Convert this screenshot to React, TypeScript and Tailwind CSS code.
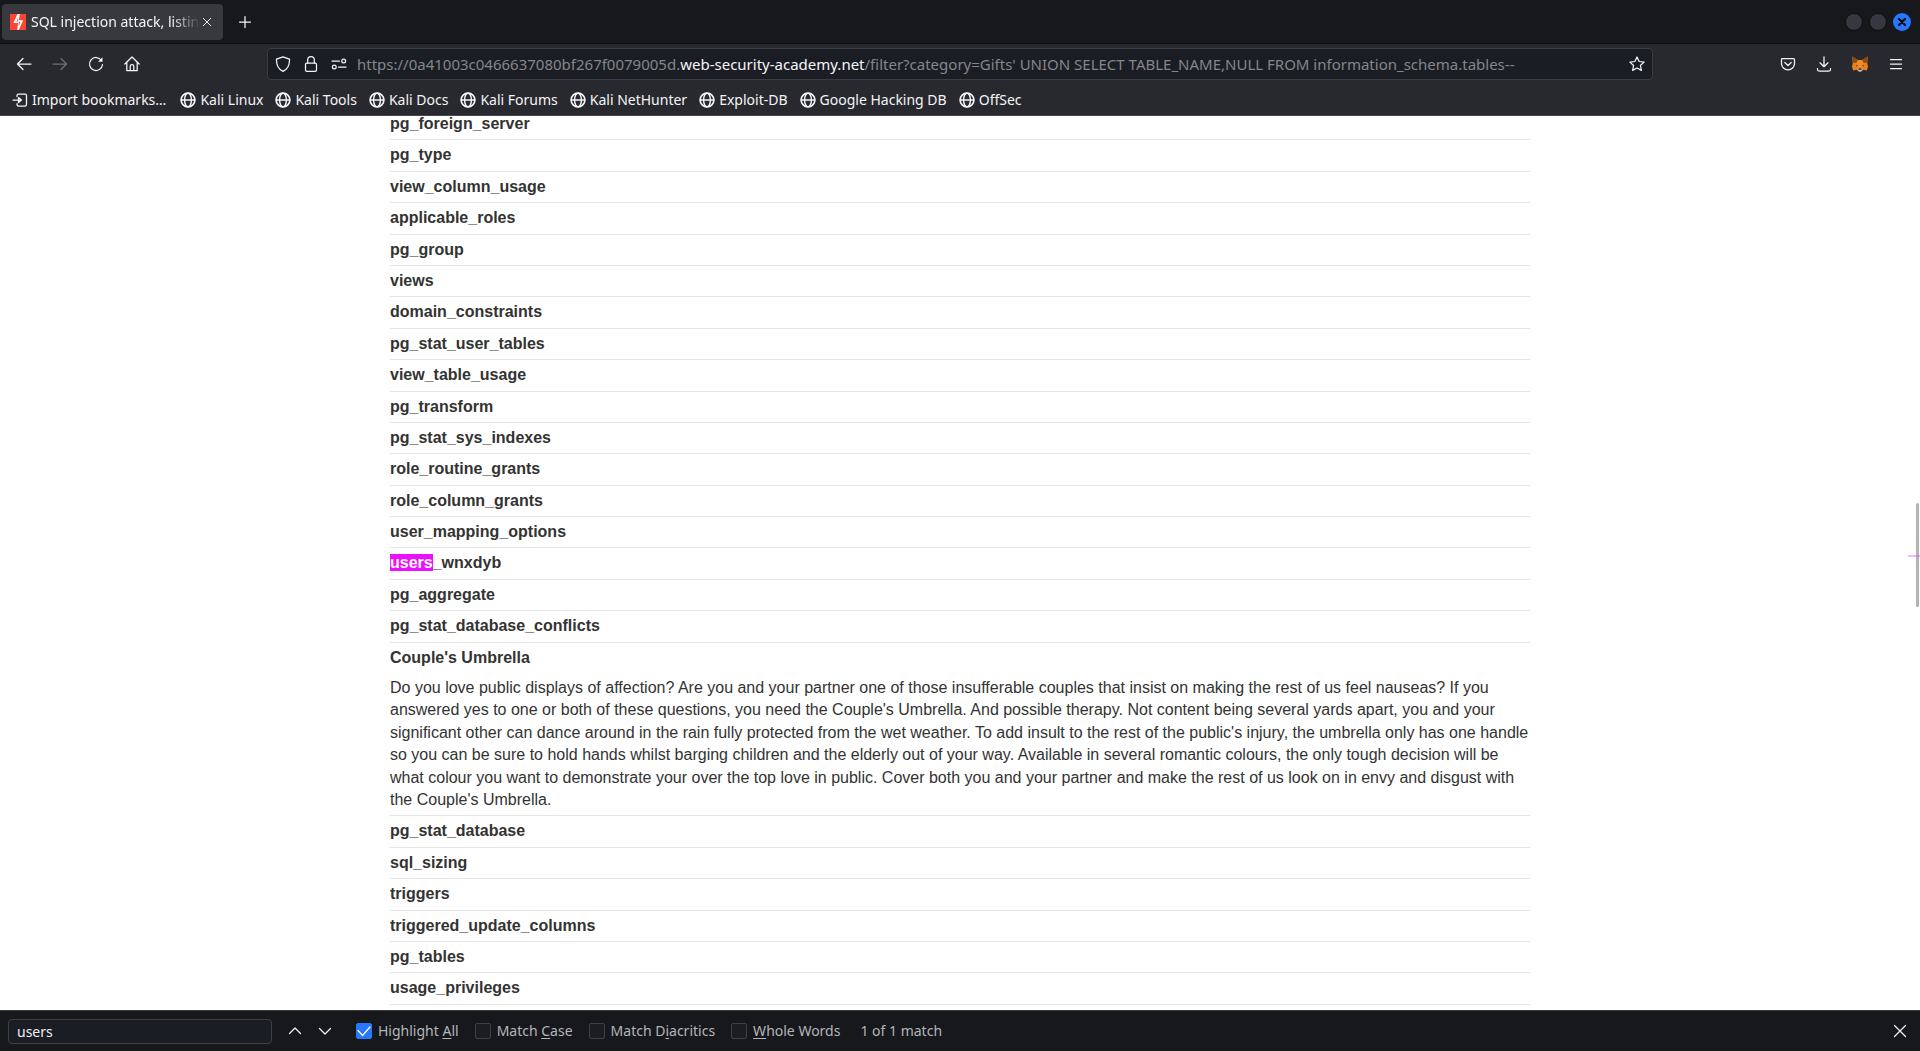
import React from "react";

const rowsBefore = [
  "pg_foreign_server",
  "pg_type",
  "view_column_usage",
  "applicable_roles",
  "pg_group",
  "views",
  "domain_constraints",
  "pg_stat_user_tables",
  "view_table_usage",
  "pg_transform",
  "pg_stat_sys_indexes",
  "role_routine_grants",
  "role_column_grants",
  "user_mapping_options",
  "users_wnxdyb",
  "pg_aggregate",
  "pg_stat_database_conflicts",
];

const rowsAfter = [
  "pg_stat_database",
  "sql_sizing",
  "triggers",
  "triggered_update_columns",
  "pg_tables",
  "usage_privileges",
];

const bookmarks = [
  "Kali Linux",
  "Kali Tools",
  "Kali Docs",
  "Kali Forums",
  "Kali NetHunter",
  "Exploit-DB",
  "Google Hacking DB",
  "OffSec",
];

type IconProps = { children: React.ReactNode; className?: string };

function Icon({ children, className = "size-4" }: IconProps) {
  return (
    <svg
      viewBox="0 0 16 16"
      className={`shrink-0 ${className}`}
      fill="none"
      stroke="currentColor"
      strokeWidth="1.25"
      strokeLinecap="round"
      strokeLinejoin="round"
      aria-hidden="true"
    >
      {children}
    </svg>
  );
}

function ToolButton({ label, children, dim }: { label: string; children: React.ReactNode; dim?: boolean }) {
  return (
    <button
      type="button"
      aria-label={label}
      disabled={dim}
      className={`flex size-9 items-center justify-center ${dim ? "text-[#6f7074]" : "text-[#f5f5f7]"}`}
    >
      {children}
    </button>
  );
}

function TabStrip() {
  return (
    <div className="flex h-11 items-center justify-between border-b border-[#0b0c0f] bg-[#17181c] pr-[9px]">
      <div className="flex items-center">
        <div className="ml-0.5 flex h-9 w-[221px] items-center rounded-sm bg-[#38393e] px-2">
          <svg viewBox="0 0 16 16" className="size-4 shrink-0" aria-hidden="true">
            <rect width="16" height="16" fill="#ff4433" />
            <path d="M7.500 0H9.800L8.400 9H3.400z" fill="#fff" />
            <path d="M8.400 6.200h4.800L8.800 16H7.200z" fill="#fff" />
            <path d="M8 3.500L6.600 7.400h1.200zM8.600 12.200l1.800-4.400H8.900z" fill="#ff4433" />
          </svg>
          <span className="ml-[5px] w-[170px] overflow-hidden whitespace-nowrap [mask-image:linear-gradient(to_right,#000_82%,transparent)]">
            SQL injection attack, listing the database contents
          </span>
          <button type="button" aria-label="Close tab">
            <Icon className="size-3">
              <path d="M3 3l10 10M13 3L3 13" />
            </Icon>
          </button>
        </div>
        <button type="button" aria-label="New tab" className="ml-2.5 p-1">
          <Icon>
            <path d="M8 2.500v11M2.500 8h11" />
          </Icon>
        </button>
      </div>
      <div className="flex items-center gap-1.5">
        <button type="button" aria-label="Minimize" className="size-[18px] rounded-full border border-[#0c0d10] bg-[#363741]" />
        <button type="button" aria-label="Maximize" className="size-[18px] rounded-full border border-[#0c0d10] bg-[#363741]" />
        <button type="button" aria-label="Close window" className="flex size-[18px] items-center justify-center rounded-full bg-[#2777ff] text-[#0c0d10]">
          <Icon className="size-3">
            <path d="M4 4l8 8M12 4l-8 8" strokeWidth="3" />
          </Icon>
        </button>
      </div>
    </div>
  );
}

function MetaMaskFox() {
  return (
    <svg viewBox="0 0 16 16" className="size-4" aria-hidden="true">
      <path d="M0 .5l6 3.600h4l6-3.600-.8 6 .8 4.200-1.200 3.800-3.400-.8L9.200 15.500H6.800L4.600 13.700l-3.400.8L0 10.700l.8-4.200z" fill="#e8821e" />
      <path d="M0 .5l6 3.600L4.500 7 .8 6.500zM16 .5l-6 3.600L11.500 7l3.700-.5z" fill="#8a4a1c" />
      <path d="M4.500 7L6 4.100h4L11.500 7l-.8 4H5.300z" fill="#f68a22" />
      <path d="M4 8.800l2 .9-1.400.7zM12 8.800l-2 .9 1.400.7z" fill="#3a3330" />
      <path d="M5 13l1.800-.6h2.400L11 13l-1.800 2.600H6.800z" fill="#c9bcb0" />
      <path d="M6.600 12.400h2.800l.2 1.400H6.400z" fill="#16110e" />
    </svg>
  );
}

function Toolbar() {
  return (
    <div className="flex h-10 items-center px-1.5">
      <div className="flex flex-1">
        <ToolButton label="Back">
          <Icon><path d="M15 8H1.500M7 2.500L1.500 8 7 13.500" /></Icon>
        </ToolButton>
        <ToolButton label="Forward" dim>
          <Icon><path d="M1 8h13.500M9 2.500L14.500 8 9 13.500" /></Icon>
        </ToolButton>
        <ToolButton label="Reload">
          <Icon>
            <path d="M13.500 4.500A6.500 6.500 0 1 0 14.500 8.500" />
            <path d="M14.500 1.200v4.600H10z" fill="currentColor" stroke="none" />
          </Icon>
        </ToolButton>
        <ToolButton label="Home">
          <Icon>
            <path d="M.8 8L8 1l7.200 7M2.800 6.500v8.200h10.400V6.500M6.200 14.500v-4a1.800 1.800 0 0 1 3.600 0v4" />
          </Icon>
        </ToolButton>
      </div>
      <div className="flex h-8 w-[1386px] shrink items-center rounded-sm border border-[#3c3d43] bg-[#1b1d24] px-[7px] text-[#f5f5f7]">
        <div className="flex gap-3">
          <button type="button" aria-label="Tracking protection">
            <Icon><path d="M8 .8L1.500 3.200C1.300 8.500 3.500 13.300 8 15.400c4.500-2.100 6.700-6.900 6.500-12.200z" /></Icon>
          </button>
          <button type="button" aria-label="Site security">
            <Icon><rect x="2.500" y="7" width="11" height="8.300" rx="1.300" /><path d="M4.700 7V4a3.300 3.300 0 0 1 6.600 0v3" /></Icon>
          </button>
          <button type="button" aria-label="Site permissions">
            <Icon><path d="M1 5h7.500M7.500 11H15" /><circle cx="12.700" cy="5" r="1.900" /><circle cx="3.300" cy="11" r="1.900" /></Icon>
          </button>
        </div>
        <div role="textbox" aria-label="Address" className="ml-2.5 flex-1 overflow-hidden pt-px text-[15px] whitespace-pre text-[#85868a]">
          https://0a41003c0466637080bf267f0079005d.<span className="text-[#f5f5f7]">web-security-academy.net</span>/filter?category=Gifts' UNION SELECT TABLE_NAME,NULL FROM information_schema.tables--
        </div>
        <button type="button" aria-label="Bookmark this page">
          <Icon><path d="M8 1l2.100 4.500 5 .6-3.700 3.400 1 4.900L8 12l-4.400 2.400 1-4.900L.9 6.100l5-.6z" /></Icon>
        </button>
      </div>
      <div className="flex flex-1 justify-end">
        <ToolButton label="Save to Pocket">
          <Icon><path d="M2.500 2.500h11a1 1 0 0 1 1 1V7.500a6.500 6.300 0 0 1-13 0V3.500a1 1 0 0 1 1-1zM4.800 6.500L8 9.500l3.200-3" /></Icon>
        </ToolButton>
        <ToolButton label="Downloads">
          <Icon><path d="M8 .8v9.700M4 6.800l4 3.900 4-3.900M1.500 12.500v1a1.500 1.500 0 0 0 1.500 1.500h10a1.500 1.500 0 0 0 1.500-1.500v-1" /></Icon>
        </ToolButton>
        <ToolButton label="MetaMask"><MetaMaskFox /></ToolButton>
        <ToolButton label="Open application menu">
          <Icon><path d="M2.500 3.500h11M2.500 8h11M2.500 12.500h11" /></Icon>
        </ToolButton>
      </div>
    </div>
  );
}

function BookmarksBar() {
  return (
    <nav aria-label="Bookmarks" className="flex h-[31px] items-center gap-3 pl-3 whitespace-nowrap">
      <a href="#import" className="mr-0.5 flex items-center gap-1">
        <Icon><path d="M1 8h8M6.500 5.500L9.500 8l-3 2.500zM5 4.500V3.500A1.500 1.500 0 0 1 6.500 2H13a1.500 1.500 0 0 1 1.500 1.500v9A1.500 1.500 0 0 1 13 14H6.500A1.500 1.500 0 0 1 5 12.500v-1" /></Icon>
        Import bookmarks…
      </a>
      {bookmarks.map((name) => (
        <a key={name} href="#bookmark" className="flex items-center gap-1">
          <Icon>
            <circle cx="8" cy="8" r="6.900" strokeWidth="1.600" />
            <ellipse cx="8" cy="8" rx="3.400" ry="6.900" strokeWidth="1.400" />
            <path d="M1.200 8h13.600" strokeWidth="1.400" />
          </Icon>
          {name}
        </a>
      ))}
    </nav>
  );
}

function TableName({ name }: { name: string }) {
  const query = "users";
  const matched = name.startsWith(query);
  return (
    <tr className="border-b border-[#e5e5e5]">
      <th scope="row" className="py-1 text-left font-bold">
        {matched ? (
          <>
            <mark className="bg-[#ef0fff] text-white">{query}</mark>
            {name.slice(query.length)}
          </>
        ) : (
          name
        )}
      </th>
    </tr>
  );
}

function Page() {
  return (
    <main className="relative flex min-h-0 flex-1 flex-col overflow-hidden bg-white">
      <div className="mx-auto -mt-[7px] w-full max-w-[1140px] shrink-0 font-['Liberation_Sans',sans-serif] text-base leading-[1.4] text-[#333332]">
        <table className="w-full border-collapse">
          <tbody>
            {rowsBefore.map((name) => <TableName key={name} name={name} />)}
            <tr>
              <th scope="row" className="py-1 text-left font-bold">Couple's Umbrella</th>
            </tr>
            <tr className="border-b border-[#e5e5e5]">
              <td className="py-1">
                Do you love public displays of affection? Are you and your partner one of those insufferable couples that insist on making the rest of us feel nauseas? If you answered yes to one or both of these questions, you need the Couple's Umbrella. And possible therapy. Not content being several yards apart, you and your significant other can dance around in the rain fully protected from the wet weather. To add insult to the rest of the public's injury, the umbrella only has one handle so you can be sure to hold hands whilst barging children and the elderly out of your way. Available in several romantic colours, the only tough decision will be what colour you want to demonstrate your over the top love in public. Cover both you and your partner and make the rest of us look on in envy and disgust with the Couple's Umbrella.
              </td>
            </tr>
            {rowsAfter.map((name) => <TableName key={name} name={name} />)}
          </tbody>
        </table>
      </div>
      <div className="absolute top-[387px] right-px h-[104px] w-[3px] rounded-full bg-[#b3b3b3]" />
      <div className="absolute top-[439px] right-0 h-0.5 w-3 bg-[#ef0fff]/30" />
    </main>
  );
}

function FindOption({ checked, before, letter, after }: { checked?: boolean; before?: string; letter: string; after: string }) {
  return (
    <label className="flex items-center gap-1.5">
      <span className="relative size-4">
        <input
          type="checkbox"
          defaultChecked={checked}
          className="peer block size-4 appearance-none rounded-xs border border-[#3f4045] bg-[#1c1d21] checked:border-[#2777ff] checked:bg-[#2777ff]"
        />
        <Icon className="pointer-events-none absolute inset-0 hidden size-4 text-white peer-checked:block">
          <path d="M2 7.500l4.500 5L14 4" />
        </Icon>
      </span>
      <span className="whitespace-pre">{before}<u className="underline-offset-2">{letter}</u>{after}</span>
    </label>
  );
}

function FindBar() {
  return (
    <div className="flex h-[41px] shrink-0 items-center border-t border-[#38393e] bg-[#17181c] px-2 text-[#b4b5b8]">
      <input
        type="text"
        aria-label="Find in page"
        defaultValue="users"
        className="h-[25px] w-[264px] rounded-sm border border-[#3f4045] bg-[#1b1d24] px-2 text-[#f0f0f2]"
      />
      <div className="ml-[15px] flex gap-3.5 text-[#f0f0f2]">
        <button type="button" aria-label="Previous match"><Icon><path d="M2.500 10.500L8 5l5.500 5.500" /></Icon></button>
        <button type="button" aria-label="Next match"><Icon><path d="M2.500 5.500L8 11l5.500-5.500" /></Icon></button>
      </div>
      <div className="ml-[23px] flex items-center gap-4 whitespace-nowrap">
        <FindOption checked before="Highlight " letter="A" after="ll" />
        <FindOption before="Match " letter="C" after="ase" />
        <FindOption before="Match D" letter="i" after="acritics" />
        <FindOption letter="W" after="hole Words" />
        <span className="ml-1">1 of 1 match</span>
      </div>
      <button type="button" aria-label="Close find bar" className="mr-1 ml-auto text-[#f0f0f2]">
        <Icon><path d="M2.500 2.500l11 11M13.500 2.500l-11 11" /></Icon>
      </button>
    </div>
  );
}

export default function App() {
  return (
    <div className="flex h-screen flex-col overflow-hidden bg-[#17181c] font-['Noto_Sans',sans-serif] text-sm text-[#f5f5f7]">
      <header className="shrink-0 border-b border-[#46434d] bg-[#28292e]">
        <TabStrip />
        <Toolbar />
        <BookmarksBar />
      </header>
      <Page />
      <FindBar />
    </div>
  );
}
